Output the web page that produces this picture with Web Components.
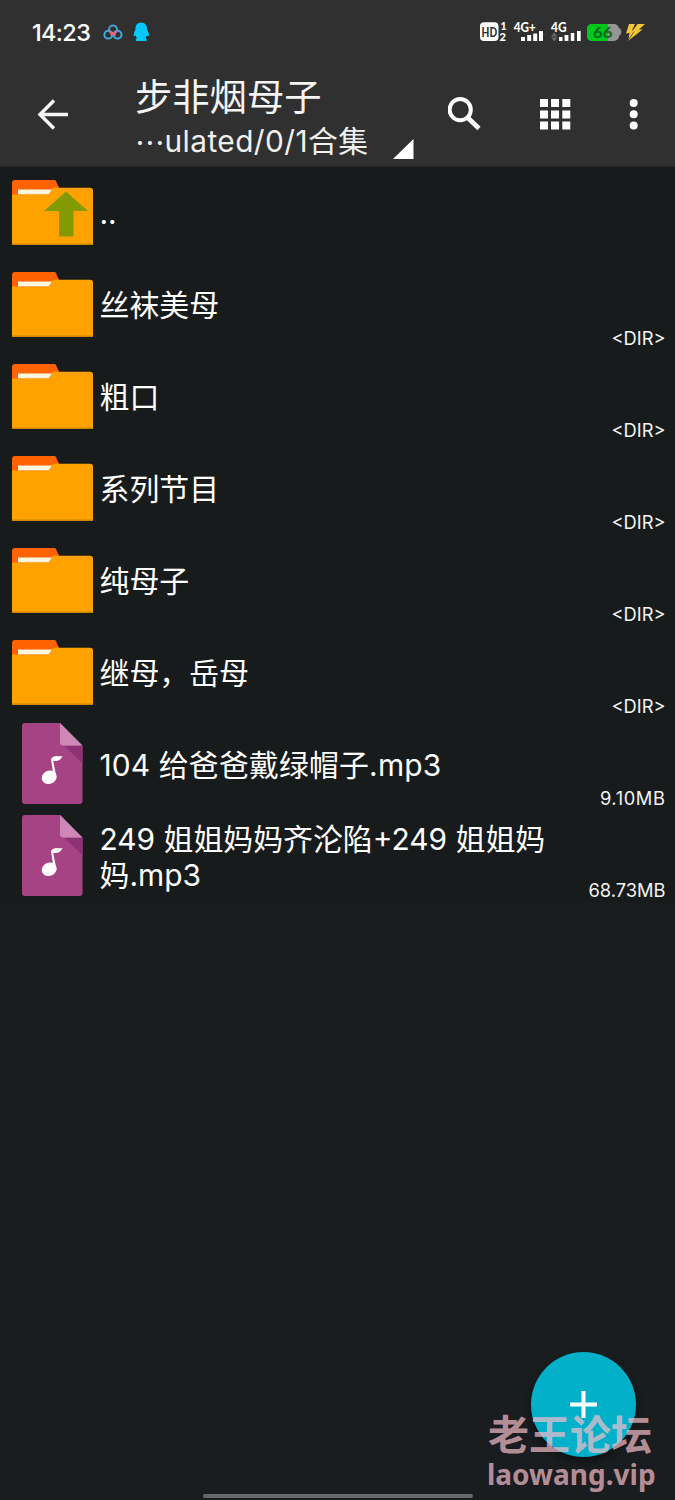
<!DOCTYPE html>
<html lang="zh-CN">
<head>
<meta charset="utf-8">
<title>File manager</title>
<style>
html,body{margin:0;padding:0;background:#191d1f}
body{width:675px;height:1500px;overflow:hidden;font-family:Inter,"Noto Sans CJK SC",sans-serif;color:#fff}
</style>
</head>
<body>
<file-manager></file-manager>
<script>
const define=(name,html,init)=>customElements.define(name,class extends HTMLElement{
  connectedCallback(){
    if(this.shadowRoot)return;
    const root=this.attachShadow({mode:"open"});
    const t=document.createElement("template");
    t.innerHTML=html;
    root.append(t.content.cloneNode(true));
    if(init)init(this,root);
  }
});

define("status-bar",`<style>
:host{display:flex;height:65px;box-sizing:border-box;padding:0 29px 0 32px;align-items:center;justify-content:space-between}
.left{display:flex;align-items:center;height:65px}
time{font-size:23.4px;line-height:30px;width:59px;margin-right:12px;font-weight:500;letter-spacing:-.6px;white-space:nowrap;padding-top:1px}
svg{display:block}
</style>
<div class="left"><time>14:23</time>
<svg width="48" height="24" viewBox="103 20.500 48 24"><g fill="none" stroke-width="2"><circle cx="108.3" cy="34.2" r="3.9" stroke="#3fa9e0"/><circle cx="117.6" cy="34.2" r="3.9" stroke="#3fa9e0"/><circle cx="113" cy="29" r="4" stroke="#4aa0cf"/><path d="M109.5 30.5a4 4 0 0 0 7 0M110.8 34.8L113 32.4L115.5 35" stroke="#e8617b"/></g><path fill="#07c8fb" d="M141.2 22c-4 0-5.9 3-5.8 7.3-.7 1.5-1.900 3.6-1.700 5.800.2 1.300 1 .8 1.800-.300.3 1 .8 1.800 1.500 2.600-1 .5-1.400 1.300-1 3h10.500c.5-1.700 0-2.500-1-3 .700-.800 1.200-1.600 1.500-2.600.8 1.100 1.800 1.600 2 .3.2-2.200-1.200-4.300-1.900-5.800.1-4.300-1.900-7.300-5.900-7.300z"/></svg></div>
<svg width="166" height="26" viewBox="480 20 166 26" font-family="Lato,sans-serif" font-weight="900" fill="#fff">
<rect x="480" y="22.300" width="18.500" height="18.700" rx="4"/><text x="481.600" y="36.500" font-size="12.500" fill="#303030" textLength="15.500" lengthAdjust="spacingAndGlyphs">HD</text>
<text x="500.600" y="30.300" font-size="10.500">1</text><text x="499.600" y="41.200" font-size="11">2</text>
<text x="513.700" y="32.200" font-size="12.500" textLength="22" lengthAdjust="spacingAndGlyphs">4G+</text>
<text x="551" y="32.200" font-size="12.500" textLength="15.500" lengthAdjust="spacingAndGlyphs">4G</text>
<path d="M521 37h4v4h-4zM527.200 35h4v6h-4zM533.200 33.500h4v7.500h-4zM539 31h4v10h-4zM559 37h3.500v4h-3.500zM564.600 35h3.800v6h-3.800zM570.800 33h3.500v8h-3.500zM577 31h3.700v10h-3.700z"/>
<path fill="#666" d="M551 36.500l3.200-4 3.200 4zM551 37.500h6.400l-3.200 4z"/>
<rect x="587" y="24" width="32" height="17" rx="5" fill="#969696"/><path fill="#969696" d="M619 28q3 1 2 6l-2 2z"/><path fill="#00c91b" d="M592 24h16v17h-16a5 5 0 0 1-5-5v-7a5 5 0 0 1 5-5z"/>
<text x="593" y="38.300" font-size="15.500" fill="#126d18" textLength="19.500" lengthAdjust="spacingAndGlyphs">66</text>
<path fill="#f6c634" d="M629 24h6l-3 6.500 3-.7-6.500 9.500 1-6.500-3.500 1zM637.500 24h7.500l-6 5.500h3.500L628 41l6.500-9.500h-2.500z"/>
</svg>`);

define("tool-bar",`<style>
:host{display:grid;grid-template-columns:136px 284px 1fr;height:101px}
.back{padding:33px 0 0 36px}
svg{display:block}
.title{font-size:37.300px;line-height:44px;color:#f4f4f4;padding-top:8px;white-space:nowrap;margin-left:-1px;font-family:"Noto Sans CJK SC",sans-serif}
.line{display:flex;height:36px;width:278px;justify-content:space-between;margin-top:-2px}
.path{display:flex;font-size:29.800px;line-height:36px;color:#f0f0f0;white-space:nowrap;letter-spacing:.45px;margin:8px 0 0 -1px}
.dots{font-family:"Noto Sans CJK SC",sans-serif;width:29.500px}
.tri{margin-top:24px}
.actions{display:flex;padding:32px 0 0 28px}
</style>
<div class="back"><svg width="34" height="34" viewBox="36 98 34 34"><path d="M54 100.500L40 114.500L54 128.500M40 114.500H68" fill="none" stroke="#f4f4f4" stroke-width="3.500"/></svg></div>
<div><div class="title">步非烟母子</div><div class="line"><div class="path"><span class="dots">…</span><span>ulated/0/1合集</span></div><svg class="tri" width="21" height="22" viewBox="0 0 21 22"><path d="M20.500 0V20H0z" fill="#fff"/></svg></div></div>
<div class="actions"><svg width="200" height="36" viewBox="448 97 200 36" fill="#fff"><circle cx="460.200" cy="109.700" r="10.600" fill="none" stroke="#fff" stroke-width="4"/><path d="M467 117L479 128.500" stroke="#fff" stroke-width="4.600"/><path d="M540 99h8v8h-8zm11 0h8v8h-8zm11.300 0h8v8h-8zM540 110.500h8v8h-8zm11 0h8v8h-8zm11.300 0h8v8h-8zM540 121.500h8v8h-8zm11 0h8v8h-8zm11.300 0h8v8h-8z"/><circle cx="633.700" cy="103" r="4"/><circle cx="633.700" cy="114.300" r="4"/><circle cx="633.700" cy="125.600" r="4"/></svg></div>`);

const folder='<path fill="#ff6200" d="M12 28V16q0-3 3-3h39q1.500 0 2 1l4 9-8 5z"/><path fill="#fff9df" d="M18 22.500h34l-3 5H18z"/><path fill="#ffa200" d="M12 27.500h37q.700 0 1-1l2-4q.800-1.800 2-1.800H90q3 0 3 3V78H12z"/><path fill="#ce8500" d="M12 76.500h81V78H12z"/>';
const icons={
  folder,
  up:folder+'<path fill="#829b05" d="M66 24.500l22 19.500H73.500v25.500H59V44H44z"/>',
  music:'<path fill="#a54385" d="M25 4h35l22.500 23v55q0 3-3 3H25q-3 0-3-3V7q0-3 3-3z"/><path fill="#8d3375" d="M64 27h18.500v17z"/><path fill="#cf87b8" d="M60 4l22.500 22.500H63q-3 0-3-3z"/><ellipse cx="49.200" cy="58.300" rx="7.600" ry="6.600" transform="rotate(-25 49.200 58.300)" fill="#fff"/><path fill="#fff" d="M51 40q2-3 5.500-3 3 .5 6 0-2 5-7 5h-2.300l3 15-2.500 1z"/>'
};
define("file-row",`<style>
:host{display:grid;grid-template-columns:99.500px 450px 1fr;height:92px;background:#171b1b}
svg{display:block}
.name{align-self:center;font-size:29.900px;line-height:36px;padding-bottom:1px;overflow-wrap:anywhere;letter-spacing:var(--name-spacing,0)}
.meta{align-self:end;text-align:right;padding:0 9.500px 1px 0;font-size:18.300px;line-height:24px;letter-spacing:var(--meta-spacing,0);color:#f3f3f3;white-space:nowrap}
</style><svg width="99" height="92" viewBox="0 0 99 92"></svg><div class="name"><slot></slot></div><div class="meta"></div>`,(el,root)=>{
  root.querySelector("svg").innerHTML=icons[el.getAttribute("icon")];
  root.querySelector(".meta").textContent=el.getAttribute("meta")||"";
});

define("add-button",`<style>:host{display:block;width:105px;height:105px;border-radius:50%;background:#02b0ca;box-shadow:0 4px 9px #0007}svg{display:block}</style>
<svg width="105" height="105"><path d="M52.500 39v27M39 52.500h27" stroke="#fff" stroke-width="4"/></svg>`);

define("site-mark",`<style>:host{display:block;font-weight:700;color:rgba(250,192,205,.71);white-space:nowrap}
.cn{font:700 41px/46px "Noto Sans CJK SC",sans-serif}.url{font:700 28px/32px "Noto Sans",sans-serif;margin:3px 0 0 -1px}</style>
<div class="cn">老王论坛</div><div class="url">laowang.vip</div>`);

define("file-manager",`<style>
:host{display:flex;flex-direction:column;position:relative;width:675px;height:1500px;overflow:hidden;background:#191d1f}
header{background:#303030;height:166px;border-bottom:1px solid #202323}
main{flex:1}
.wide{--name-spacing:.15px;--meta-spacing:.6px}
add-button{position:absolute;left:530.500px;top:1352px}
site-mark{position:absolute;left:488px;top:1409px}
.home{width:270px;height:4px;border-radius:2px;background:#64696c;margin:0 0 2px 202.500px}
</style>
<header><status-bar></status-bar><tool-bar></tool-bar></header>
<main>
<file-row icon="up">..</file-row>
<file-row icon="folder" meta="&lt;DIR&gt;">丝袜美母</file-row>
<file-row icon="folder" meta="&lt;DIR&gt;">粗口</file-row>
<file-row icon="folder" meta="&lt;DIR&gt;">系列节目</file-row>
<file-row icon="folder" meta="&lt;DIR&gt;">纯母子</file-row>
<file-row icon="folder" meta="&lt;DIR&gt;">继母，岳母</file-row>
<file-row class="wide" icon="music" meta="9.10MB">104 给爸爸戴绿帽子.mp3</file-row>
<file-row icon="music" meta="68.73MB">249 姐姐妈妈齐沦陷+249 姐姐妈妈.mp3</file-row>
</main>
<div class="home"></div>
<add-button></add-button>
<site-mark></site-mark>`);
</script>
</body>
</html>
